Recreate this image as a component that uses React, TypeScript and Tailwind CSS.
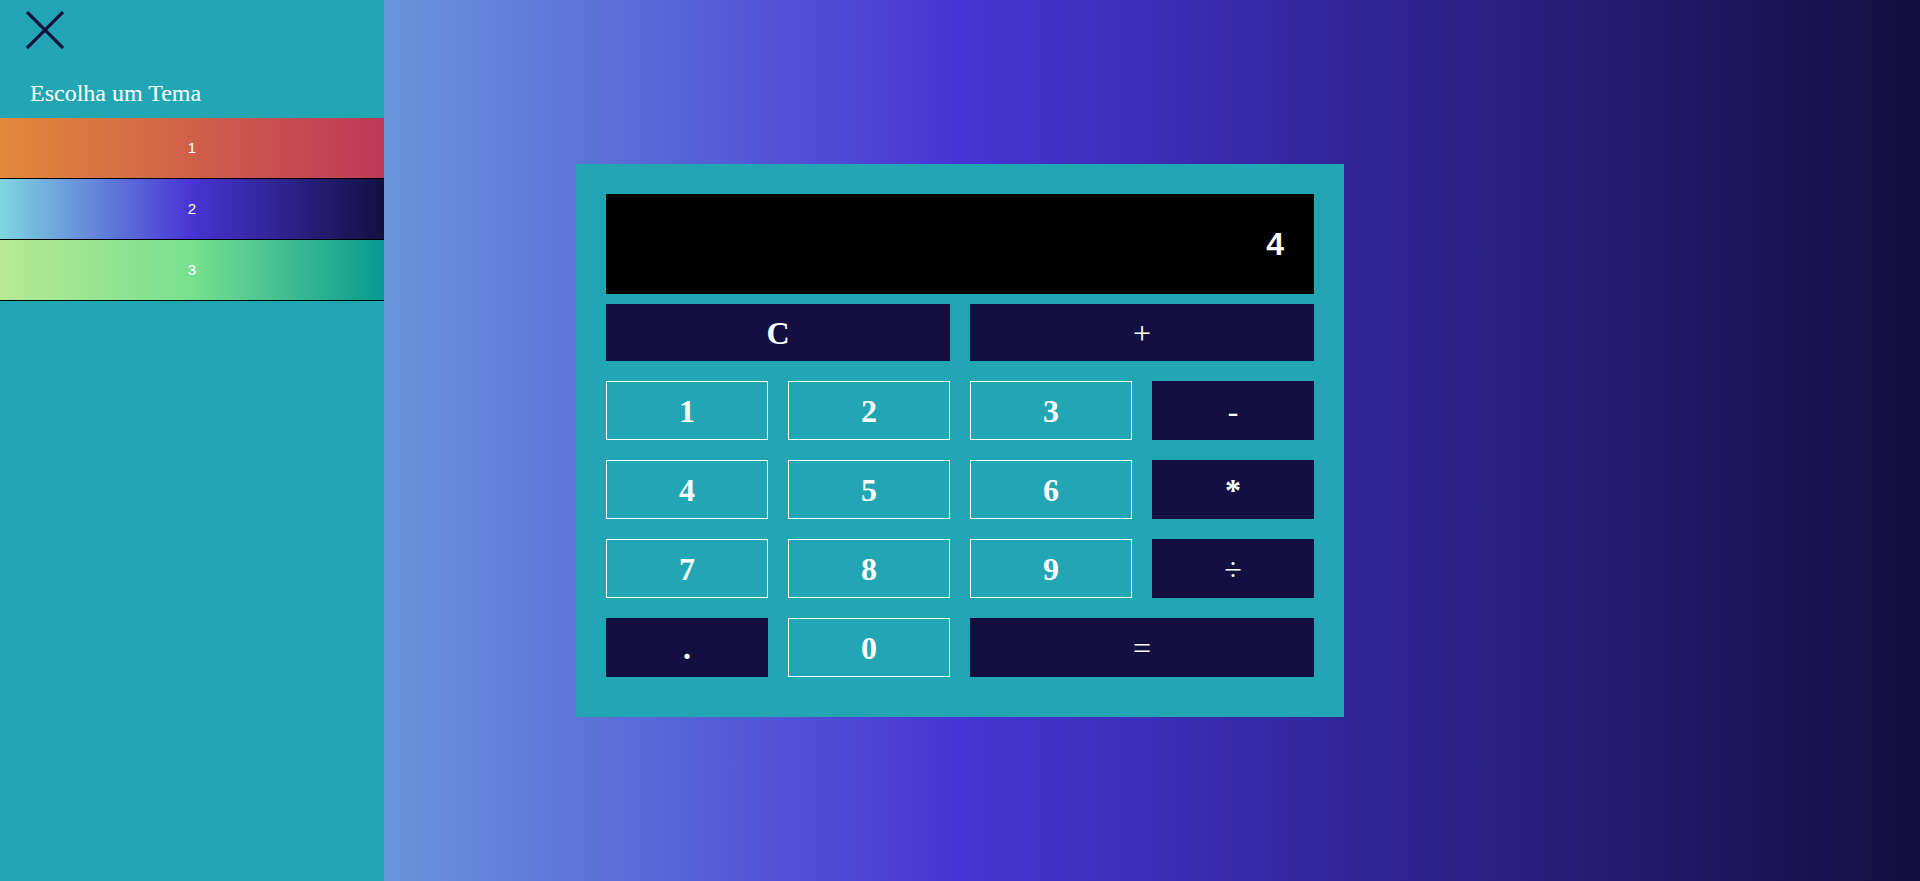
import React from "react";

type Key = { label: string; kind: "num" | "op"; wide?: boolean; bold?: boolean };

const ROWS: Key[][] = [
  [
    { label: "1", kind: "num" },
    { label: "2", kind: "num" },
    { label: "3", kind: "num" },
    { label: "-", kind: "op" },
  ],
  [
    { label: "4", kind: "num" },
    { label: "5", kind: "num" },
    { label: "6", kind: "num" },
    { label: "*", kind: "op", bold: true },
  ],
  [
    { label: "7", kind: "num" },
    { label: "8", kind: "num" },
    { label: "9", kind: "num" },
    { label: "÷", kind: "op" },
  ],
  [
    { label: ".", kind: "op", bold: true },
    { label: "0", kind: "num" },
    { label: "=", kind: "op", wide: true },
  ],
];

const THEMES = [
  { id: "1", bg: "bg-[linear-gradient(to_right,#e2893a,#bd3859)]" },
  { id: "2", bg: "bg-[linear-gradient(to_right,#7ed6df,#4834d4,#130f40)]" },
  { id: "3", bg: "bg-[linear-gradient(to_right,#b8e994,#78e08f,#079992)]" },
];

function CalcKey({ k }: { k: Key }) {
  const isNum = k.kind === "num";
  return (
    <button
      type="button"
      className={`flex h-[59px] items-center justify-center text-[32px] leading-none text-white ${
        k.wide ? "col-span-2" : ""
      } ${isNum ? "border border-white bg-transparent font-bold" : "bg-[#130f40]"} ${
        k.bold ? "font-bold" : ""
      }`}
    >
      {k.label}
    </button>
  );
}

export default function App() {
  return (
    <div className="relative flex h-screen w-full items-center justify-center bg-[linear-gradient(to_right,#7ed6df,#4834d4,#130f40)] font-['Liberation_Serif','Times_New_Roman',serif]">
      {/* theme drawer */}
      <aside className="absolute left-0 top-0 flex h-full w-[384px] flex-col bg-[#22a6b3]">
        <div className="h-[60px] pl-[26px] pt-[11px]">
          <svg width="38" height="38" viewBox="0 0 38 38" fill="none">
            <path d="M1 1L37 37M37 1L1 37" stroke="#130f40" strokeWidth="3.2" />
          </svg>
        </div>
        <h2 className="pb-[11px] pl-[30px] pt-[19px] text-[24px] font-normal leading-[28px] text-white">
          Escolha um Tema
        </h2>
        {THEMES.map((t) => (
          <button
            key={t.id}
            type="button"
            className={`flex h-[61px] w-full items-center justify-center border-b border-black font-['Liberation_Sans',Arial,sans-serif] text-[15px] text-white ${t.bg}`}
          >
            {t.id}
          </button>
        ))}
      </aside>

      {/* calculator */}
      <div className="flex w-[768px] flex-col bg-[#22a6b3] px-[30px] pb-[40px] pt-[30px]">
        <div className="flex h-[100px] items-center justify-end bg-black pr-[30px] font-['Liberation_Sans',Arial,sans-serif] text-[32px] font-bold text-white">
          4
        </div>
        <div className="mt-[10px] grid grid-cols-2 gap-[20px]">
          <button type="button" className="flex h-[57px] items-center justify-center bg-[#130f40] text-[32px] font-bold leading-none text-white">
            C
          </button>
          <button type="button" className="flex h-[57px] items-center justify-center bg-[#130f40] text-[32px] leading-none text-white">
            +
          </button>
        </div>
        <div className="mt-[20px] grid grid-cols-4 gap-[20px]">
          {ROWS.flat().map((k) => (
            <CalcKey key={k.label} k={k} />
          ))}
        </div>
      </div>
    </div>
  );
}
